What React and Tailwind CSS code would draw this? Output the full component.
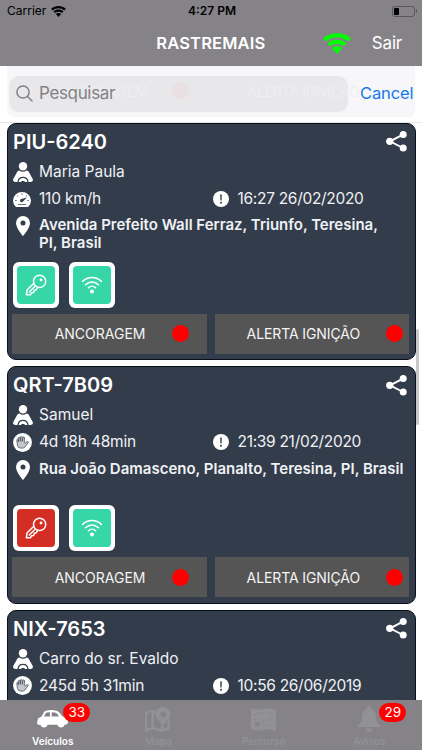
const vehicles = [
    {
        plate: 'PIU-6240',
        driver: 'Maria Paula',
        status: '110 km/h',
        moving: true,
        date: '16:27 26/02/2020',
        address: 'Avenida Prefeito Wall Ferraz, Triunfo, Teresina, PI, Brasil',
        keyColor: 'bg-[#36d6a9]',
    },
    {
        plate: 'QRT-7B09',
        driver: 'Samuel',
        status: '4d 18h 48min',
        moving: false,
        date: '21:39 21/02/2020',
        address: 'Rua João Damasceno, Planalto, Teresina, PI, Brasil',
        keyColor: 'bg-[#d42e24]',
    },
    {
        plate: 'NIX-7653',
        driver: 'Carro do sr. Evaldo',
        status: '245d 5h 31min',
        moving: false,
        date: '10:56 26/06/2019',
    },
];

function SignalIcon({ className }) {
    return (
        <svg viewBox="0 0 28 21" className={className} fill="currentColor">
            <path d="M0 5.2C8 -1.5 20 -1.5 28 5.2L25.2 8.5C18.5 3 9.5 3 2.8 8.5Z" />
            <path d="M4.4 10.2C10 5.6 18 5.6 23.6 10.2L20.8 13.4C16.8 10.2 11.2 10.2 7.2 13.4Z" />
            <path d="M8.8 15C12 12.6 16 12.6 19.2 15L14 21Z" />
        </svg>
    );
}

function DriverIcon() {
    return (
        <svg viewBox="0 0 20 20" className="h-5 w-5" fill="white">
            <circle cx="10" cy="4.2" r="4.2" />
            <path d="M6.4 8.6C5 8.8 4.2 9.6 3.6 11L.4 16.8C-.6 18.8 .8 20 2.6 20H17.4C19.2 20 20.6 18.800 19.600 16.800L16.400 11C15.800 9.600 15 8.800 13.600 8.600C11.600 10.200 8.400 10.200 6.400 8.600Z" />
            <path d="M5 20C5.400 16.800 7.300 15.300 10 15.300S14.600 16.800 15 20" fill="none" stroke="#333c4b" strokeWidth="1.300" />
            <path d="M7.800 20C8.500 18.600 11.500 18.600 12.200 20Z" fill="#333c4b" />
        </svg>
    );
}

function SpeedIcon() {
    return (
        <svg viewBox="0 0 18 16" className="h-4 w-[18px]">
            <path d="M2.500 15.500A9 8.600 0 1 1 15.500 15.500Q14.900 16 14 16H4Q3.100 16 2.500 15.500Z" fill="white" />
            <g fill="none" stroke="#333c4b" strokeWidth=".7">
                <path d="M2 9.500h1.700M4 4.500l1.200 1.100M9 2.300v1.600M14 4.500l-1.200 1.100M16 9.500h-1.700M5 13.500h8" />
            </g>
            <path d="M14 6.600L8.400 8A1.600 1.600 0 1 0 10 10.400Z" fill="#333c4b" />
        </svg>
    );
}

function HandIcon() {
    return (
        <svg viewBox="0 0 19 19" className="h-[19px] w-[19px]">
            <circle cx="9.500" cy="9.500" r="9.400" fill="white" />
            <path
                d="M4.400 12.200L3.800 6.700Q4.200 5.800 5 6.600L5.500 9L5.400 4.700Q6.200 3.700 7 4.700L7.300 8.400L7.500 3.900Q8.400 2.900 9.200 3.900L9.300 8.300L9.900 4.200Q10.800 3.400 11.500 4.400L11.300 9.300L12 10.200L14.100 8.500Q15.600 8.500 15.200 9.600L12 13.800Q10.900 15.100 9.400 15.100H7.400Q4.800 14.700 4.400 12.200Z"
                fill="#c3c6cb" stroke="#4a5260" strokeWidth=".8" strokeLinejoin="round"
            />
        </svg>
    );
}

function PinIcon() {
    return (
        <svg viewBox="0 0 14 20" className="h-5 w-3.5">
            <path fillRule="evenodd" d="M7 0A7 7 0 0 0 0 7C0 12.200 7 20 7 20S14 12.200 14 7A7 7 0 0 0 7 0ZM7 4.500A2.500 2.500 0 1 1 7 9.500A2.500 2.500 0 1 1 7 4.500Z" fill="white" />
        </svg>
    );
}

function AlertIcon() {
    return (
        <svg viewBox="0 0 16 16" className="h-4 w-4">
            <circle cx="8" cy="8" r="8" fill="white" />
            <path d="M7.200 3.500H8.800L8.600 9.500H7.400Z" fill="#333c4b" />
            <circle cx="8" cy="11.800" r="1" fill="#333c4b" />
        </svg>
    );
}

function ShareIcon() {
    return (
        <svg viewBox="0 0 21 21" className="h-[21px] w-[21px]" fill="white">
            <path d="M17 3.700L4 10.300L17 17" fill="none" stroke="white" strokeWidth="1.900" />
            <circle cx="17.200" cy="3.600" r="3.500" />
            <circle cx="3.700" cy="10.300" r="3.600" />
            <circle cx="17.200" cy="17.100" r="3.500" />
        </svg>
    );
}

function KeyIcon() {
    return (
        <svg viewBox="0 0 22 22" className="h-[22px] w-[22px]" fill="none" stroke="white" strokeWidth="1.500" strokeLinejoin="round" strokeLinecap="round">
            <circle cx="14.600" cy="7.400" r="6.100" />
            <circle cx="16" cy="6" r="1.400" fill="white" stroke="none" />
            <path d="M8.800 9.200L2 16L1.400 20.800L5.600 20.700L6.500 18.700L8.700 18.400L9.200 16.300L11.200 15.800L12.600 13.400M4.300 18L9.600 12.700" />
        </svg>
    );
}

function WifiTileIcon() {
    return (
        <svg viewBox="0 0 22 18" className="h-[18px] w-[22px]" fill="none" stroke="white" strokeWidth="1.600" strokeLinecap="round">
            <path d="M1.600 5.400C7 .1 15 .1 20.400 5.400M4.500 8.700C8.200 5 13.800 5 17.500 8.700M7.500 11.700C9.500 9.700 12.500 9.700 14.500 11.700" />
            <circle cx="11" cy="15.600" r="2" fill="white" stroke="none" />
        </svg>
    );
}

function StatusTile({ color, children }) {
    return (
        <div className="h-[46px] w-[46px] rounded-[6px] bg-white p-1">
            <div className={`flex h-full w-full items-center justify-center rounded-[4px] ${color}`}>{children}</div>
        </div>
    );
}

function ActionButton({ label, className }) {
    return (
        <button className={`flex h-10 w-[194.500px] items-center justify-end gap-[26px] bg-[#555] text-[14px] text-[#f4f4f4] ${className}`}>
            <span className="whitespace-nowrap">{label}</span>
            <span className="h-[17px] w-[17px] rounded-full bg-[#ff0000]" />
        </button>
    );
}

function VehicleCard({ vehicle }) {
    return (
        <div className="h-[237.5px] shrink-0 rounded-[9px] border-[1.5px] border-[#0b0f1a] bg-[#333c4b] pr-[5px] pl-[4.500px] text-[#eff1f5]">
            <div className="flex h-[34.500px] items-center justify-between pt-[2px] pr-[2.500px] pl-px">
                <h2 className="text-[20px] font-semibold text-white">{vehicle.plate}</h2>
                <ShareIcon />
            </div>
            <div className="flex h-[27px] items-center">
                <div className="flex w-[27px] shrink-0 pl-px"><DriverIcon /></div>
                <span className="text-[15.500px]">{vehicle.driver}</span>
            </div>
            <div className="flex h-[27px] items-center">
                <div className="flex w-[27px] shrink-0 pl-px">{vehicle.moving ? <SpeedIcon /> : <HandIcon />}</div>
                <span className="w-[174px] text-[15.500px] tracking-[-0.2px]">{vehicle.status}</span>
                <AlertIcon />
                <span className="ml-[8.500px] text-[15.500px] tracking-[-0.3px] whitespace-nowrap">{vehicle.date}</span>
            </div>
            {vehicle.address && (
                <>
                    <div className="flex h-[49.500px] items-start pt-[4px]">
                        <div className="flex w-[27px] shrink-0 pl-1"><PinIcon /></div>
                        <p className={`text-[15px] leading-[18px] font-semibold ${vehicle.moving ? 'w-[350px]' : 'w-[368px]'}`}>{vehicle.address}</p>
                    </div>
                    <div className="flex gap-[10px] pl-[0.500px]">
                        <StatusTile color={vehicle.keyColor}><KeyIcon /></StatusTile>
                        <StatusTile color="bg-[#36d6a9]"><WifiTileIcon /></StatusTile>
                    </div>
                    <div className="mt-[6px] flex gap-[8px]">
                        <ActionButton label="ANCORAGEM" className="pr-[18px]" />
                        <ActionButton label="ALERTA IGNIÇÃO" className="pr-[6px] tracking-[-0.1px]" />
                    </div>
                </>
            )}
        </div>
    );
}

function CarIcon() {
    return (
        <svg viewBox="0 0 31 18" className="h-[18px] w-[31px]" fill="white">
            <path fillRule="evenodd" d="M1 8.500L4.500 6.500L7.300 1.800Q8.200 .5 10 .4Q15 -.4 19.500 .8Q21.500 1.400 22.700 3L25.400 6.300L29 8Q30.600 8.800 31 12Q31 14.500 28.500 14.700L27.500 14.800A3.600 3.600 0 0 1 20.500 14.800H10.500A3.600 3.600 0 0 1 3.500 14.800H1.500Q0 14.500 0 13ZM7 6.400H13V2.200L10 2.400Q9 2.500 8.500 3.400ZM14.700 6.400H22L20.400 4.100Q19.400 2.600 17.700 2.400L14.700 2.200Z" />
        </svg>
    );
}

function MapIcon() {
    return (
        <svg viewBox="0 0 26 25" className="h-[25px] w-[26px]" fill="#929193">
            <path fillRule="evenodd" d="M0 5L7 2.500L12 4.500V6.500L9 6V20L16 22.300V17.500L18 19.500L19 18V21.500L22.500 20V14L25 11V22L16.500 25L8 22.500L0 25ZM2.300 6.500V21.500L6.500 20V5Z" />
            <path fillRule="evenodd" d="M18 0A7.500 7.500 0 0 0 10.500 7.500C10.500 11 18 18.500 18 18.500S25.500 11 25.500 7.500A7.500 7.500 0 0 0 18 0ZM18.200 4.500A2.800 2.800 0 1 1 18.200 10.100A2.800 2.800 0 1 1 18.200 4.500Z" />
        </svg>
    );
}

function RouteIcon() {
    return (
        <svg viewBox="0 0 25 23" className="h-[23px] w-[25px]">
            <path d="M0 0L8 2L16 0L25 2V23L16 21L8 23L0 21Z" fill="#929193" />
            <g fill="none" stroke="#858388" strokeWidth="1.200">
                <path d="M4 12V7Q4 5 7 5H17Q21 5 21 9T18 12H13Q11 12 11 15T14 18H21" strokeDasharray="1.700 2.200" />
                <path d="M4 14L8.500 18.500M8.500 14L4 18.500" strokeWidth="1.800" />
            </g>
        </svg>
    );
}

function BellIcon() {
    return (
        <svg viewBox="0 0 24 26" className="h-[26px] w-[24px]" fill="#929193">
            <path d="M12 0Q14 0 14 3Q19 4.500 19 11Q19 17 23 19Q24 21 22.500 21H1.500Q0 21 1 19Q5 17 5 11Q5 4.500 10 3Q10 0 12 0ZM8.500 22.500H15.500Q14.500 26 12 26T8.500 22.500Z" />
        </svg>
    );
}

function Tab({ label, icon, badge, badgeClass, active }) {
    return (
        <div className="flex w-[105.5px] flex-col items-center">
            <div className="relative flex h-[34px] items-center justify-center pt-[4px]">
                {icon}
                {badge && (
                    <span className={`absolute flex h-[19px] w-[27px] items-center justify-center rounded-full bg-[#ff0000] text-[13.500px] text-white ${badgeClass}`}>
                        {badge}
                    </span>
                )}
            </div>
            <span className={`text-[10px] leading-[15px] font-semibold ${active ? 'text-white' : 'text-[#929193]'}`}>{label}</span>
        </div>
    );
}

function App() {
    return (
        <div className="relative flex h-[750px] w-[422px] flex-col overflow-hidden bg-white font-['Inter',sans-serif]">
            <header className="h-[65.5px] shrink-0 bg-[#858388]">
                <div className="grid h-[22px] grid-cols-3 items-center pr-[5px] pl-[7px] text-[12px] text-black">
                    <div className="flex items-center gap-[5px]">
                        Carrier
                        <SignalIcon className="h-[11px] w-[15px]" />
                    </div>
                    <span className="text-center font-semibold whitespace-nowrap">4:27 PM</span>
                    <div className="flex items-center justify-end gap-px">
                        <div className="h-[11px] w-[23px] rounded-[3px] border border-[#59575c] p-px">
                            <div className="h-full w-[5px] rounded-[1px] bg-black" />
                        </div>
                        <div className="h-1 w-[1.500px] rounded-r bg-[#59575c]" />
                    </div>
                </div>
                <div className="flex h-[43.500px] items-center justify-end pr-[20px] text-white">
                    <h1 className="mr-[57.500px] text-[16.500px] font-semibold tracking-[0.15px]">RASTREMAIS</h1>
                    <SignalIcon className="mr-[21px] h-[21px] w-[28px] text-[#00ff00]" />
                    <span className="text-[17px] tracking-[-0.2px]">Sair</span>
                </div>
            </header>

            <div className="mx-[7px] flex h-[51px] shrink-0 items-center rounded-b-md bg-[#f7f7f9] pt-[5px] pl-0.5">
                <div className="relative flex h-9 w-[339px] items-center gap-[6px] rounded-[10px] bg-[#e8e8ea] pl-[7px] text-[#828186]">
                    {/* rows scrolled under the translucent bar */}
                    <span className="absolute top-[5px] left-[48px] text-[14px] text-[#eeeef0]">ANCORAGEM</span>
                    <span className="absolute top-[6px] left-[163px] h-[17px] w-[17px] rounded-full bg-[#eadfe1] blur-[1px]" />
                    <span className="absolute top-[5px] left-[238.500px] text-[14px] tracking-[-0.2px] whitespace-nowrap text-[#eeeef0]">ALERTA IGNIÇÃO</span>
                    <svg viewBox="0 0 17 17" className="relative h-[17px] w-[17px]" fill="none" stroke="currentColor" strokeWidth="1.500" strokeLinecap="round">
                        <circle cx="7" cy="7" r="6.100" />
                        <path d="M11.500 11.500L16 16" />
                    </svg>
                    <span className="relative text-[17px] tracking-[-0.35px]">Pesquisar</span>
                </div>
                <span className="ml-[12px] text-[16.500px] tracking-[-0.1px] text-[#1479ec]">Cancel</span>
            </div>

            <main className="mt-[5px] flex min-h-0 flex-1 flex-col gap-[6px] overflow-hidden border-t border-[#e6e6e8] pr-[6.500px] pl-[6.500px]">
                {vehicles.map((vehicle) => (
                    <VehicleCard key={vehicle.plate} vehicle={vehicle} />
                ))}
            </main>

            <div className="absolute top-[329px] right-[3px] h-[96px] w-[3px] rounded-full bg-[#c9c9cb]" />

            <nav className="flex h-[50px] shrink-0 bg-[#858388]">
                <Tab label="Veículos" icon={<CarIcon />} badge="33" badgeClass="top-[2.500px] left-[26px]" active />
                <Tab label="Mapa" icon={<MapIcon />} />
                <Tab label="Percurso" icon={<RouteIcon />} />
                <Tab label="Avisos" icon={<BellIcon />} badge="29" badgeClass="top-[2.500px] left-[22px]" />
            </nav>
        </div>
    );
}

export default App;
